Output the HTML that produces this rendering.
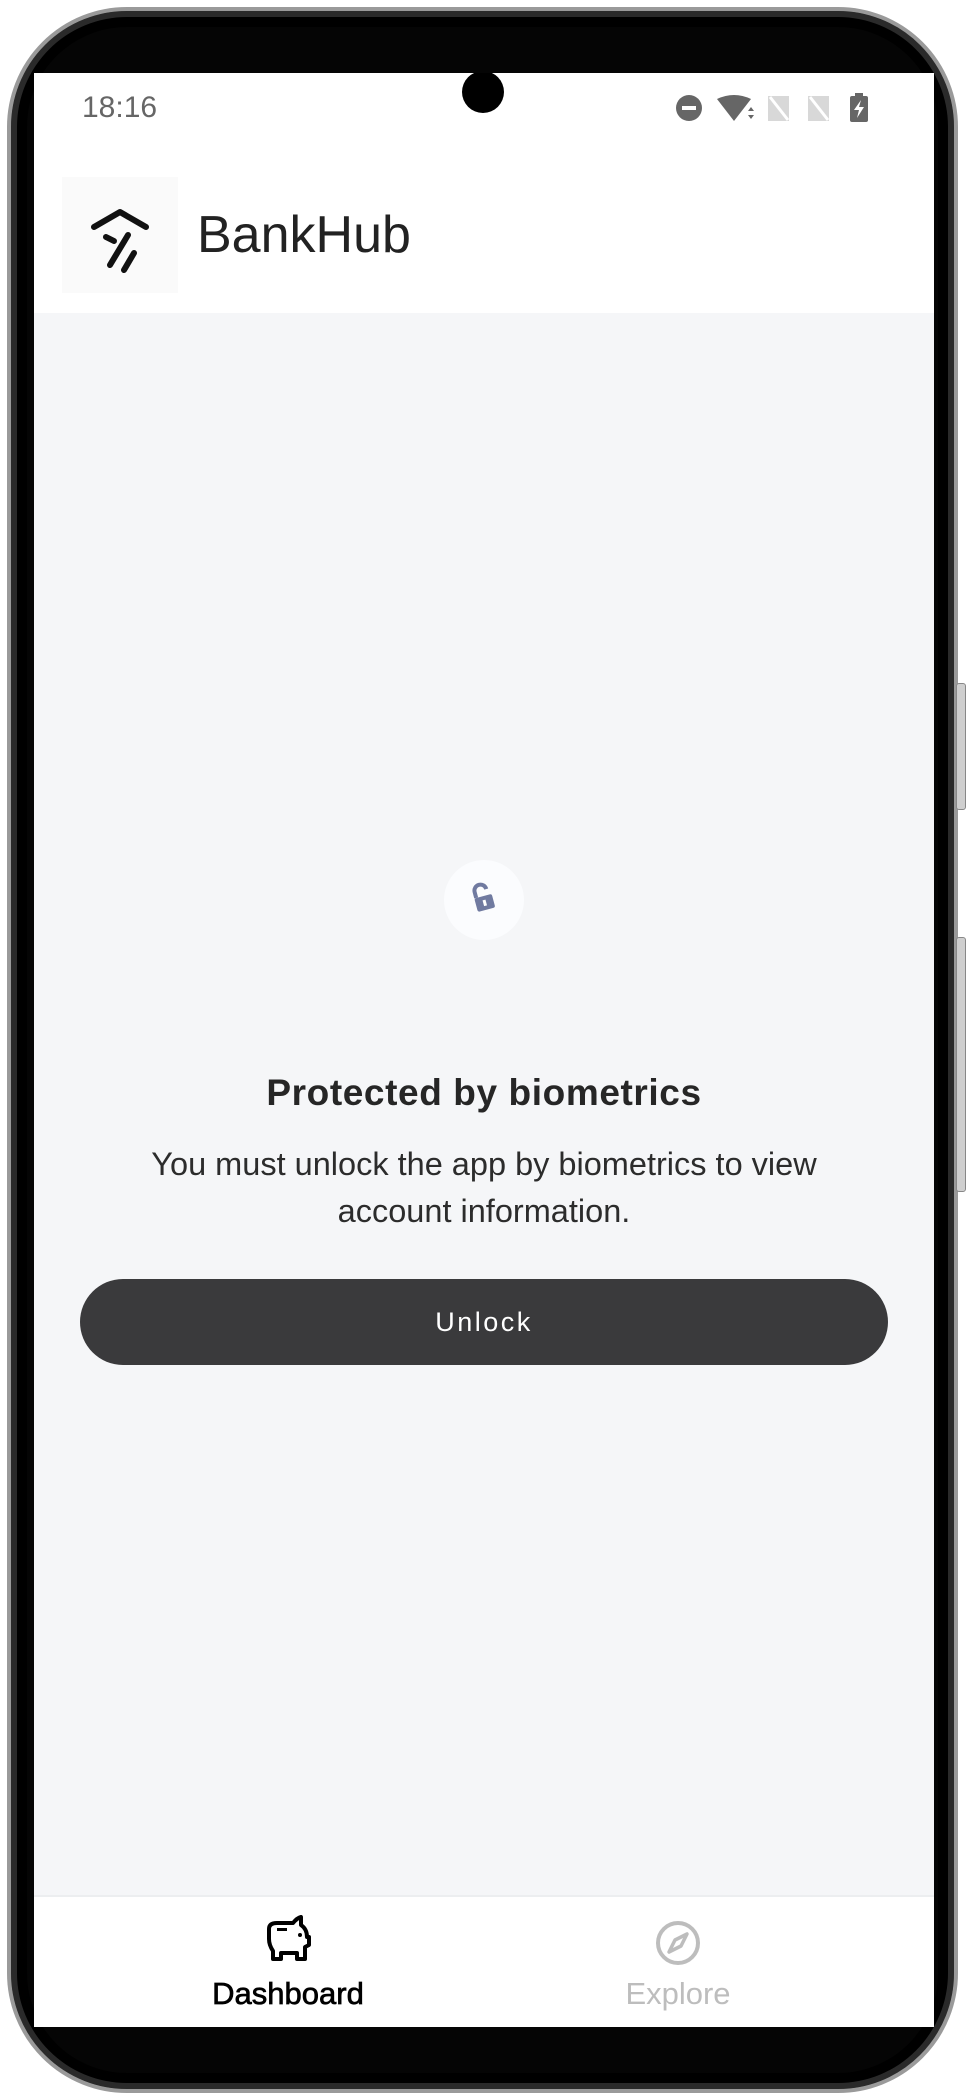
<!DOCTYPE html>
<html><head><meta charset="utf-8"><style>
*{margin:0;padding:0;box-sizing:border-box}
body{width:978px;height:2100px;background:#fff;position:relative;overflow:hidden;font-family:"Liberation Sans",Arial,sans-serif}
.frame{position:absolute;left:7px;top:7px;width:951px;height:2086px;border-radius:120px;background:#050505;border:4px solid #9a9a9a;box-shadow:inset 0 0 0 6px #2a2a2a,inset 0 0 0 16px #000}
.btn{position:absolute;left:956px;width:10px;background:#cfcfcf;border:1px solid #888;border-radius:3px}
.screen{position:absolute;left:34px;top:73px;width:900px;height:1954px;background:#f5f6f8;overflow:hidden}
.status{position:absolute;left:0;top:0;width:100%;height:240px;background:#fff}
.time{position:absolute;left:48px;top:18px;font-size:30px;color:#666}
.cam{position:absolute;left:428px;top:-2px;width:42px;height:42px;border-radius:50%;background:#000}
.logo{position:absolute;left:28px;top:104px;width:116px;height:116px;background:#fafafa}
.title{position:absolute;left:163px;top:132px;font-size:52px;color:#222}
.circle{position:absolute;left:410px;top:787px;width:80px;height:80px;border-radius:50%;background:#fbfcfe}
h1{position:absolute;left:0;width:100%;top:999px;text-align:center;font-size:37px;font-weight:bold;color:#262626;letter-spacing:.6px}
p.t{position:absolute;left:70px;width:760px;top:1068px;text-align:center;font-size:32.5px;line-height:47px;color:#2c2c2c}
.unlock{position:absolute;left:46px;top:1206px;width:808px;height:86px;border-radius:43px;background:#3a3a3c;color:#fff;font-size:27px;letter-spacing:2.5px;text-align:center;line-height:86px}
.nav{position:absolute;left:0;top:1822px;width:100%;height:132px;background:#fff;border-top:2px solid #eceef0}
.lbl{position:absolute;top:79px;font-size:31px;width:220px;text-align:center}
</style></head><body>
<div class="frame"></div>
<div class="btn" style="top:683px;height:127px"></div>
<div class="btn" style="top:937px;height:255px"></div>
<div class="screen">
 <div class="status">
  <div class="time">18:16</div>
  <div class="cam"></div>
  <svg style="position:absolute;left:640px;top:20px" width="240" height="30" viewBox="0 0 240 30">
   <circle cx="15" cy="15" r="13" fill="#666"/><rect x="8" y="13" width="14" height="4" fill="#fff"/>
   <path d="M43 6 Q60 -2 77 6 L60 28 Z" fill="#666"/><path d="M74 18 l3 -4 l3 4z M74 22 l3 4 l3 -4z" fill="#666"/>
   <path d="M94 3 L115 3 L115 28 L94 28 Z" fill="#d8d8d8"/><path d="M96 4 L114 27" stroke="#fff" stroke-width="3"/>
   <path d="M134 3 L155 3 L155 28 L134 28 Z" fill="#d8d8d8"/><path d="M136 4 L154 27" stroke="#fff" stroke-width="3"/>
   <rect x="176" y="3" width="18" height="26" rx="2" fill="#666"/><rect x="181" y="0" width="8" height="4" fill="#666"/>
   <path d="M187 7 L180 17 L185 17 L183 25 L190 14 L185 14 Z" fill="#fff"/>
  </svg>
  <div class="logo"><svg width="116" height="116" viewBox="0 0 116 116">
   <path d="M32 50 L58 35 L84 50" fill="none" stroke="#111" stroke-width="6" stroke-linecap="round" stroke-linejoin="round"/>
   <path d="M66 58 L48 88 M72 76 L62 93" stroke="#111" stroke-width="6" stroke-linecap="round"/>
   <path d="M44 60 L52 64" stroke="#111" stroke-width="6" stroke-linecap="round"/>
  </svg></div>
  <div class="title">BankHub</div>
 </div>
 <div class="circle"><svg width="80" height="80" viewBox="0 0 80 80">
  <g transform="rotate(-15 40 40)"><path d="M33 36 V30 a6 6 0 0 1 12 0" fill="none" stroke="#707aa0" stroke-width="4"/>
  <rect x="31" y="36" width="18" height="14" rx="2" fill="#707aa0"/><rect x="38.5" y="40" width="3" height="6" fill="#fff"/></g>
 </svg></div>
 <h1>Protected by biometrics</h1>
 <p class="t">You must unlock the app by biometrics to view<br>account information.</p>
 <div class="unlock">Unlock</div>
 <div class="nav">
  <svg style="position:absolute;left:229px;top:18px" width="50" height="48" viewBox="0 0 50 48">
   <path d="M6 14 Q6 8 14 8 L30 8 Q34 3 38 2 L38 10 Q44 14 44 22 L46 22 L46 30 L42 32 L42 44 L34 44 L34 38 L18 38 L18 44 L10 44 L10 36 Q6 30 6 24 Z" fill="none" stroke="#000" stroke-width="4" stroke-linejoin="round"/>
   <rect x="14" y="13" width="10" height="3" fill="#000"/><circle cx="37" cy="20" r="2" fill="#000"/>
  </svg>
  <div class="lbl" style="left:144px;color:#000;-webkit-text-stroke:0.7px #000">Dashboard</div>
  <svg style="position:absolute;left:620px;top:22px" width="48" height="48" viewBox="0 0 48 48">
   <circle cx="24" cy="24" r="20" fill="none" stroke="#bdbdbd" stroke-width="4"/>
   <path d="M33 15 L27 27 L15 33 L21 21 Z" fill="none" stroke="#bdbdbd" stroke-width="3.5" stroke-linejoin="round"/>
  </svg>
  <div class="lbl" style="left:534px;color:#bdbdbd">Explore</div>
 </div>
</div>
</body></html>
